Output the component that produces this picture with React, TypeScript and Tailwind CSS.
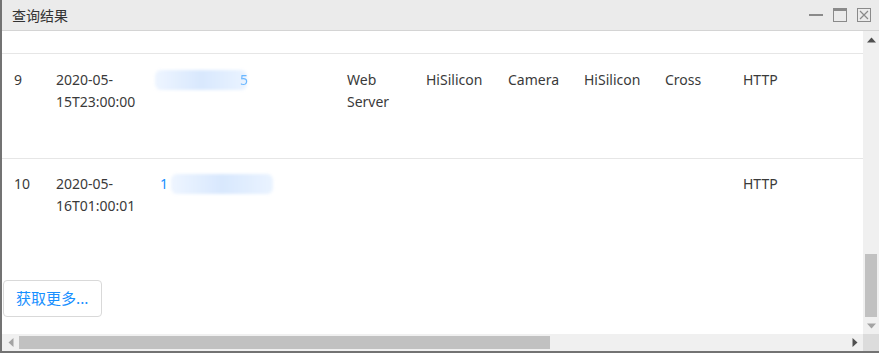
import React from 'react';

// Two rows of a scanned-device result list, scrolled part-way down
const rows = [
  {
    no: '9',
    time: ['2020-05-', '15T23:00:00'],
    ip: { head: '', tail: '5', blur: 'w-[92px] ml-[-5px]' },
    service: ['Web', 'Server'],
    vendor: 'HiSilicon',
    type: 'Camera',
    brand: 'HiSilicon',
    os: 'Cross',
    proto: 'HTTP',
  },
  {
    no: '10',
    time: ['2020-05-', '16T01:00:01'],
    ip: { head: '1', tail: '', blur: 'w-[102px] ml-[3px]' },
    service: [],
    vendor: '',
    type: '',
    brand: '',
    os: '',
    proto: 'HTTP',
  },
];

const cols = 'grid grid-cols-[42px_104px_187px_79px_82px_76px_81px_78px_160px]';

const ArrowUp = () => (
  <svg width="9" height="6" viewBox="0 0 9 6"><path d="M0 5.5 L4.5 0.5 L9 5.5 Z" fill="#505050" /></svg>
);
const ArrowDown = () => (
  <svg width="9" height="6" viewBox="0 0 9 6"><path d="M0 0.5 L4.5 5.5 L9 0.5 Z" fill="#a3a3a3" /></svg>
);
const ArrowLeft = () => (
  <svg width="6" height="9" viewBox="0 0 6 9"><path d="M5.5 0 L0.5 4.5 L5.5 9 Z" fill="#a3a3a3" /></svg>
);
const ArrowRight = () => (
  <svg width="6" height="9" viewBox="0 0 6 9"><path d="M0.5 0 L5.5 4.5 L0.5 9 Z" fill="#505050" /></svg>
);

const Cell: React.FC<{ children?: React.ReactNode }> = ({ children }) => (
  <div className="pr-4 leading-[22px]">{children}</div>
);

const App: React.FC = () => {
  return (
    <div
      className="w-[879px] h-[353px] bg-[#737373] pl-[2px] pb-[2px] overflow-hidden"
      style={{ fontFamily: '"Noto Sans", "Noto Sans CJK SC", sans-serif' }}
    >
      <div className="flex h-full flex-col bg-white">
        {/* Title bar */}
        <div className="flex h-[31px] shrink-0 items-center justify-between border-b border-[#d4d4d4] bg-[#ebebeb] pl-[10px] pr-[8px]">
          <span className="text-[14px] text-[#333]" style={{ fontFamily: '"Noto Sans CJK SC", sans-serif' }}>
            查询结果
          </span>
          <div className="flex items-center gap-[10px]">
            <svg width="14" height="14" viewBox="0 0 14 14">
              <rect x="0" y="6" width="14" height="2" fill="#8a8a8a" />
            </svg>
            <svg width="14" height="14" viewBox="0 0 14 14">
              <rect x="0.5" y="0.5" width="13" height="13" fill="none" stroke="#8a8a8a" />
              <rect x="0" y="0" width="14" height="3" fill="#8a8a8a" />
            </svg>
            <svg width="14" height="14" viewBox="0 0 14 14">
              <rect x="0.5" y="0.5" width="13" height="13" fill="none" stroke="#8a8a8a" />
              <path d="M3 3 L11 11 M11 3 L3 11" stroke="#8a8a8a" strokeWidth="1.2" />
            </svg>
          </div>
        </div>

        {/* Body */}
        <div className="flex min-h-0 flex-1">
          <div className="min-w-0 flex-1 overflow-hidden text-[14px] text-[#3a3a3a]">
            <div className="h-[23px] border-b border-[#e6e6e6]" />
            {rows.map((r, i) => (
              <div
                key={r.no}
                className={`${cols} pl-[12px] ${i === 0 ? 'h-[105px] pt-[15px] border-b border-[#e6e6e6]' : 'h-[121px] pt-[14px]'}`}
              >
                <Cell>{r.no}</Cell>
                <Cell>
                  {r.time.map((t) => (
                    <div key={t}>{t}</div>
                  ))}
                </Cell>
                <Cell>
                  <div className="flex items-center text-[#1890ff]">
                    {r.ip.head && <span>{r.ip.head}</span>}
                    <span
                      className={`inline-block h-[20px] rounded-[6px] bg-linear-to-r from-[#eef5ff] via-[#d8e8fd] to-[#eaf3ff] blur-[1.5px] ${r.ip.blur}`}
                    />
                    {r.ip.tail && <span className="ml-[-7px] opacity-60">{r.ip.tail}</span>}
                  </div>
                </Cell>
                <Cell>
                  {r.service.map((s) => (
                    <div key={s}>{s}</div>
                  ))}
                </Cell>
                <Cell>{r.vendor}</Cell>
                <Cell>{r.type}</Cell>
                <Cell>{r.brand}</Cell>
                <Cell>{r.os}</Cell>
                <Cell>{r.proto}</Cell>
              </div>
            ))}
            <button
              className="ml-px h-[37px] rounded-[4px] border border-[#d9d9d9] bg-white px-[12px] text-[15px] text-[#1890ff]"
              style={{ fontFamily: '"Noto Sans CJK SC", sans-serif' }}
            >
              获取更多...
            </button>
          </div>

          {/* Vertical scrollbar */}
          <div className="flex w-[16px] shrink-0 flex-col items-center bg-[#f0f0f0]">
            <div className="flex h-[17px] items-center justify-center"><ArrowUp /></div>
            <div className="flex w-full flex-1 flex-col justify-end px-[2px]">
              <div className="h-[63px] bg-[#c1c1c1]" />
            </div>
            <div className="flex h-[17px] items-center justify-center"><ArrowDown /></div>
          </div>
        </div>

        {/* Horizontal scrollbar */}
        <div className="flex h-[17px] shrink-0">
          <div className="flex flex-1 items-center bg-[#f0f0f0]">
            <div className="flex w-[17px] justify-center"><ArrowLeft /></div>
            <div className="flex-1 py-[2px]">
              <div className="h-[13px] w-[531px] bg-[#c1c1c1]" />
            </div>
            <div className="flex w-[17px] justify-center"><ArrowRight /></div>
          </div>
          <div className="w-[16px] bg-[#dcdcdc]" />
        </div>
      </div>
    </div>
  );
};

export default App;
